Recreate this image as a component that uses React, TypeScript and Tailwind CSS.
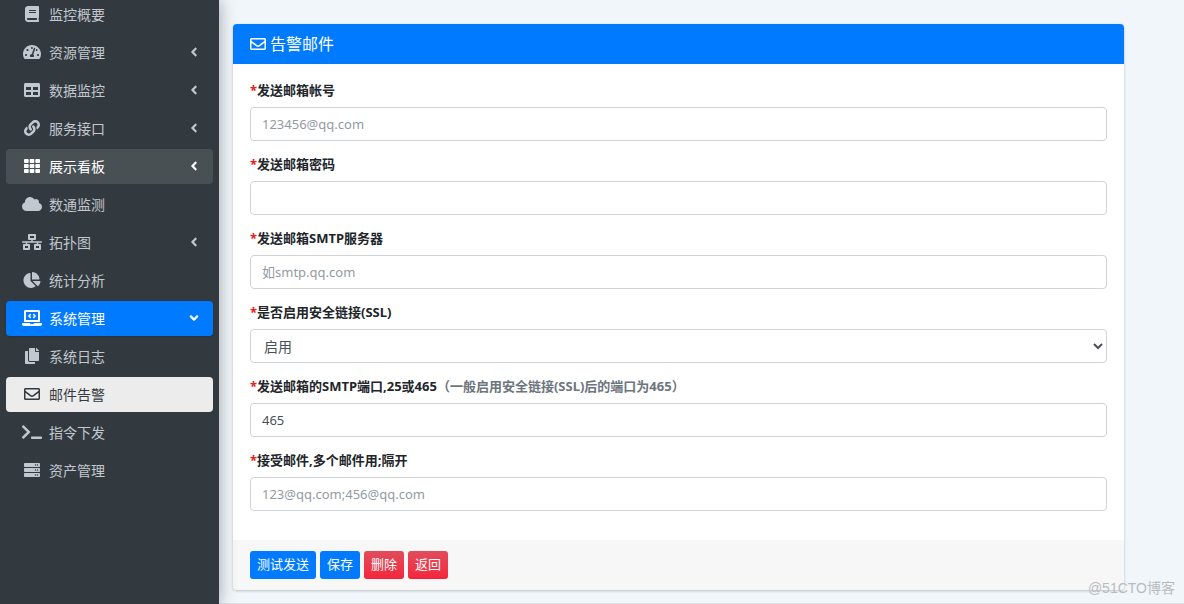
import { useState } from "react";
import type { ReactNode } from "react";
import type { IconType } from "react-icons";
import {
  FaAngleDown,
  FaAngleLeft,
  FaBook,
  FaChartPie,
  FaCloud,
  FaCopy,
  FaLaptopCode,
  FaLink,
  FaNetworkWired,
  FaRegEnvelope,
  FaServer,
  FaTable,
  FaTachometerAlt,
  FaTerminal,
  FaTh,
} from "react-icons/fa";

interface MenuItem {
  label: string;
  icon: IconType;
  arrow?: "left" | "down";
  state?: "hover" | "open" | "current";
}

const menu: MenuItem[] = [
  { label: "监控概要", icon: FaBook },
  { label: "资源管理", icon: FaTachometerAlt, arrow: "left" },
  { label: "数据监控", icon: FaTable, arrow: "left" },
  { label: "服务接口", icon: FaLink, arrow: "left" },
  { label: "展示看板", icon: FaTh, arrow: "left", state: "hover" },
  { label: "数通监测", icon: FaCloud },
  { label: "拓扑图", icon: FaNetworkWired, arrow: "left" },
  { label: "统计分析", icon: FaChartPie },
  { label: "系统管理", icon: FaLaptopCode, arrow: "down", state: "open" },
  { label: "系统日志", icon: FaCopy },
  { label: "邮件告警", icon: FaRegEnvelope, state: "current" },
  { label: "指令下发", icon: FaTerminal },
  { label: "资产管理", icon: FaServer },
];

const itemStyles = {
  normal: "text-[#c2c7d0]",
  hover: "bg-[#495054] text-white",
  open: "bg-[#007bff] text-white shadow",
  current: "bg-[#ececec] text-[#343a40]",
};

const inputStyle =
  "h-[34px] w-full rounded-[4px] border border-[#ced4da] bg-white text-[#495057] placeholder:text-[#939ba2] outline-none";

const Sidebar = () => (
  <aside className="z-10 w-[219px] shrink-0 overflow-hidden bg-[#333a3f] px-[6px] shadow-[0_0_16px_rgba(0,0,0,0.35)]">
    <nav className="-mt-[3px] flex flex-col gap-[3px]">
      {menu.map(({ label, icon: Icon, arrow, state }) => (
        <a
          key={label}
          href="#"
          className={`flex h-[35px] items-center rounded-[4px] pr-3 pb-px pl-[14px] text-[14px] ${
            itemStyles[state ?? "normal"]
          }`}
        >
          <span className="mr-[5px] flex w-6 justify-center">
            <Icon className="h-4 w-5" />
          </span>
          <span className="flex-1">{label}</span>
          {arrow === "left" && <FaAngleLeft className="size-[14px]" />}
          {arrow === "down" && <FaAngleDown className="size-[14px]" />}
        </a>
      ))}
    </nav>
  </aside>
);

interface FieldProps {
  id: string;
  label: string;
  hint?: string;
  children: ReactNode;
}

const Field = ({ id, label, hint, children }: FieldProps) => (
  <div className="flex flex-col gap-[7px]">
    <label htmlFor={id} className="text-[13px] leading-5 font-bold">
      <span className="text-[#e8201c]">*</span>
      {label}
      {hint && <span className="text-[#6c757d]">{hint}</span>}
    </label>
    {children}
  </div>
);

const App = () => {
  const [ssl, setSsl] = useState("on");

  return (
    <div className="relative flex min-h-screen bg-[#f0f6fa] font-['Noto_Sans','Noto_Sans_CJK_SC',sans-serif] text-[#212529]">
      <Sidebar />
      <div className="flex min-w-0 flex-1 flex-col">
        <main className="flex-1 pt-6 pr-[60px] pb-[13px] pl-[14px]">
          <form
            onSubmit={(e) => e.preventDefault()}
            className="overflow-hidden rounded-[4px] bg-white shadow-[0_0_1px_rgba(0,0,0,0.15),0_1px_3px_rgba(0,0,0,0.2)]"
          >
            <header className="flex h-10 items-center gap-1 bg-[#007bff] px-[17px] text-white">
              <FaRegEnvelope className="size-4" />
              <h3 className="text-[16px]">告警邮件</h3>
            </header>

            <div className="flex flex-col gap-[13px] px-[17px] pt-4 pb-[29px] text-[13px]">
              <Field id="account" label="发送邮箱帐号">
                <input
                  id="account"
                  type="text"
                  placeholder="123456@qq.com"
                  className={`${inputStyle} px-[11px]`}
                />
              </Field>
              <Field id="password" label="发送邮箱密码">
                <input
                  id="password"
                  type="password"
                  className={`${inputStyle} px-[11px]`}
                />
              </Field>
              <Field id="server" label="发送邮箱SMTP服务器">
                <input
                  id="server"
                  type="text"
                  placeholder="如smtp.qq.com"
                  className={`${inputStyle} px-[11px]`}
                />
              </Field>
              <Field id="ssl" label="是否启用安全链接(SSL)">
                <select
                  id="ssl"
                  value={ssl}
                  onChange={(e) => setSsl(e.target.value)}
                  className={`${inputStyle} pl-[9px] text-[14px]`}
                >
                  <option value="on">启用</option>
                  <option value="off">禁用</option>
                </select>
              </Field>
              <Field
                id="port"
                label="发送邮箱的SMTP端口,25或465"
                hint="（一般启用安全链接(SSL)后的端口为465）"
              >
                <input
                  id="port"
                  type="text"
                  defaultValue="465"
                  className={`${inputStyle} px-[11px]`}
                />
              </Field>
              <Field id="receivers" label="接受邮件,多个邮件用;隔开">
                <input
                  id="receivers"
                  type="text"
                  placeholder="123@qq.com;456@qq.com"
                  className={`${inputStyle} px-[11px]`}
                />
              </Field>
            </div>

            <footer className="flex h-[50px] items-center gap-1 bg-[#f7f7f7] px-[17px] text-[13px] text-white">
              <button type="button" className="h-7 rounded-[3px] bg-[#007bff] px-[7px]">
                测试发送
              </button>
              <button type="submit" className="h-7 rounded-[3px] bg-[#007bff] px-[7px]">
                保存
              </button>
              <button
                type="button"
                className="h-7 rounded-[3px] bg-linear-to-b from-[#e14b5c] to-[#f5223a] px-[7px]"
              >
                删除
              </button>
              <button
                type="button"
                className="h-7 rounded-[3px] bg-linear-to-b from-[#e14b5c] to-[#f5223a] px-[7px]"
              >
                返回
              </button>
            </footer>
          </form>
        </main>
        <div className="border-t border-[#dee2e6]" />
      </div>
      <p className="absolute right-[9px] bottom-[6px] font-['Liberation_Sans','Noto_Sans_CJK_SC',sans-serif] text-[14px] leading-5 text-[#b9bcbf]">
        @51CTO博客
      </p>
    </div>
  );
};

export default App;
